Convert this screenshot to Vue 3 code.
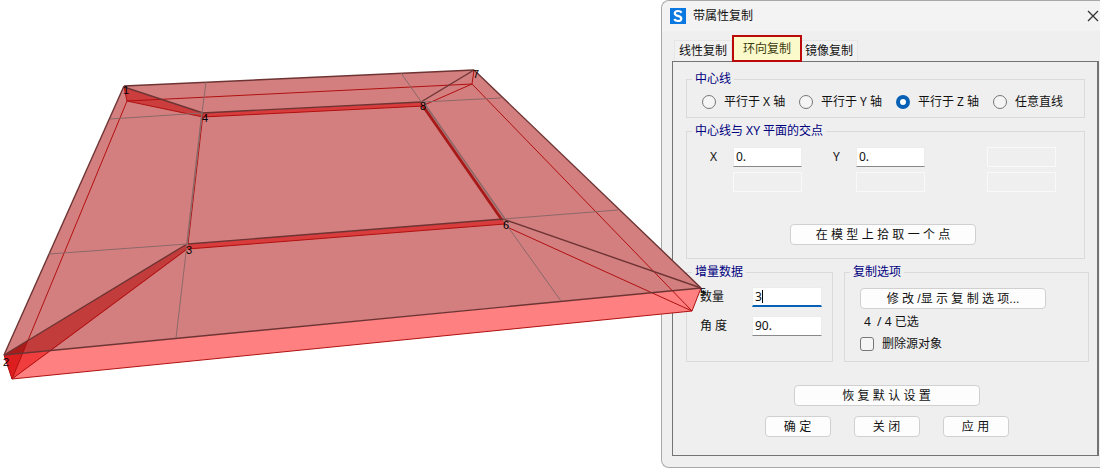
<script setup>
import { ref } from 'vue'

const tabs = ['线性复制', '环向复制', '镜像复制']
const activeTab = ref(1)
const axes = ['平行于 X 轴', '平行于 Y 轴', '平行于 Z 轴', '任意直线']
const axis = ref(2)
const x = ref('0.')
const y = ref('0.')
const count = ref('3')
const angle = ref('90.')
const removeSource = ref(false)

const gridLines = [
  [206, 82, 202, 113], [187, 244, 176, 338], [401, 73, 422, 103], [503, 220, 561, 301],
  [110, 119, 202, 113], [422, 102, 501, 98], [49, 254, 187, 244], [503, 219, 618, 210]
]
const lowerEdges = [
  [127, 101, 12, 379], [127, 101, 472, 84], [472, 84, 692, 311], [124, 87, 127, 101],
  [474, 70, 472, 84], [472, 84, 422, 106], [507, 227, 692, 311], [701, 288, 692, 311],
  [692, 311, 12, 379], [4, 355, 12, 379], [12, 379, 187, 249], [127, 101, 203, 117],
  [203, 117, 424, 106], [188, 249, 505, 224], [203, 114, 188, 244]
]
const upperEdges = [
  [124, 86, 474, 70], [474, 70, 701, 288], [701, 288, 4, 355], [4, 355, 124, 86],
  [124, 87, 203, 113], [4, 355, 187, 244], [421, 102, 474, 70], [503, 219, 701, 288],
  [202, 113, 421, 102], [188, 244, 503, 219]
]
const nodes = [
  [1, 123, 94], [2, 3, 366], [3, 186, 254], [4, 202, 122],
  [5, 700, 296], [6, 503, 229], [7, 473, 78], [8, 420, 110]
]
</script>

<template>
  <main class="workspace">
    <svg class="model" viewBox="0 0 715 468" role="img" aria-label="Model">
      <polygon points="4,355 701,288 692,311 12,379" fill="#ff8080" />
      <polygon points="124,86 474,70 701,288 4,355" fill="#d47f7f" />
      <polygon points="124,87 203,113 203,117 127,101" fill="#cc3e3e" />
      <polygon points="4,355 187,244 188,249 52,350" fill="#c23c3c" />
      <polygon points="4,355 28,340 23,353" fill="#a81c1c" />
      <polygon points="4,355 23,353 12,379" fill="#dc1e1e" />
      <polygon points="23,353 52,350 12,379" fill="#f03e3e" />
      <polygon points="202,113 421,102 424,106 203,117" fill="#d83c3c" />
      <polygon points="188,244 503,219 505,224 188,249" fill="#d83c3c" />
      <line x1="423" y1="106" x2="502" y2="220" stroke="#a81a1a" stroke-width="3" />
      <line v-for="(l, i) in lowerEdges" :key="'l' + i" class="lower" :x1="l[0]" :y1="l[1]" :x2="l[2]" :y2="l[3]" />
      <line v-for="(l, i) in upperEdges" :key="'u' + i" class="upper" :x1="l[0]" :y1="l[1]" :x2="l[2]" :y2="l[3]" />
      <line v-for="(l, i) in gridLines" :key="'g' + i" class="grid" :x1="l[0]" :y1="l[1]" :x2="l[2]" :y2="l[3]" />
      <line class="grid inner" x1="202" y1="113" x2="187" y2="244" />
      <line class="grid inner" x1="424" y1="103" x2="505" y2="219" />
      <text v-for="n in nodes" :key="n[0]" :x="n[1]" :y="n[2]">{{ n[0] }}</text>
    </svg>

    <section class="dialog" role="dialog" aria-labelledby="dialog-title">
      <header class="titlebar">
        <svg class="logo" viewBox="0 0 16 16" aria-hidden="true">
          <rect width="16" height="16" fill="#0a78e0" />
          <path d="M11.6 4.6C10.8 3.5 9.6 3 8 3 6.1 3 4.800 3.900 4.800 5.400 4.800 8.600 11.300 7.200 11.300 10.400 11.300 12 9.900 13 7.900 13 6.200 13 4.900 12.300 4.200 11.100" fill="none" stroke="#fff" stroke-width="2.200" />
        </svg>
        <h1 id="dialog-title">带属性复制</h1>
        <button class="close" type="button" aria-label="关闭窗口">
          <svg viewBox="0 0 12 12" aria-hidden="true"><path d="M1 1L11 11M11 1L1 11" fill="none" stroke="#333" stroke-width="1.300" /></svg>
        </button>
      </header>

      <nav class="tabs" role="tablist">
        <button v-for="(t, i) in tabs" :key="t" type="button" role="tab" class="tab" :class="{ active: i === activeTab }" :aria-selected="i === activeTab" @click="activeTab = i">{{ t }}</button>
      </nav>

      <form class="panel" @submit.prevent>
        <fieldset class="wide">
          <legend>中心线</legend>
          <div class="axis">
            <label v-for="(a, i) in axes" :key="a" class="choice">
              <input v-model="axis" type="radio" name="axis" :value="i">{{ a }}
            </label>
          </div>
        </fieldset>

        <fieldset class="wide">
          <legend>中心线与 XY 平面的交点</legend>
          <div class="coords">
            <label for="px">X</label><input id="px" v-model="x" type="text">
            <label for="py">Y</label><input id="py" v-model="y" type="text">
            <input class="third" type="text" disabled aria-label="Z">
            <input class="first" type="text" disabled aria-label="X2">
            <input class="second" type="text" disabled aria-label="Y2">
            <input class="third" type="text" disabled aria-label="Z2">
          </div>
          <button class="btn long pick" type="button">在 模 型 上 拾 取 一 个 点</button>
        </fieldset>

        <div class="pair">
          <fieldset>
            <legend>增量数据</legend>
            <div class="increments">
              <label for="count">数量</label>
              <div class="field">
                <input id="count" v-model="count" class="focused" type="text">
                <span class="caret" aria-hidden="true"></span>
              </div>
              <label for="angle">角 度</label>
              <div class="field"><input id="angle" v-model="angle" type="text"></div>
            </div>
          </fieldset>
          <fieldset>
            <legend>复制选项</legend>
            <div class="options">
              <button class="btn long" type="button">修 改 /显 示 复 制 选 项...</button>
              <p>4&nbsp; / 4 已选</p>
              <label class="choice"><input v-model="removeSource" type="checkbox">删除源对象</label>
            </div>
          </fieldset>
        </div>

        <div class="actions">
          <button class="btn long" type="button">恢 复 默 认 设 置</button>
          <div class="row">
            <button class="btn" type="submit">确 定</button>
            <button class="btn" type="button">关 闭</button>
            <button class="btn" type="button">应 用</button>
          </div>
        </div>
      </form>
    </section>
  </main>
</template>

<style>
body {
  margin: 0;
  background: #fff;
}
</style>

<style scoped>
* {
  box-sizing: border-box;
}
.workspace {
  position: relative;
  display: grid;
  grid-template-columns: minmax(0, 661fr) minmax(0, 439fr);
  overflow: hidden;
  font: 12px/16px "Noto Sans", "Noto Sans CJK SC", sans-serif;
  color: #111;
}
button, input {
  font: inherit;
  color: inherit;
  margin: 0;
  padding: 0;
}
.model {
  position: absolute;
  left: 0;
  top: 0;
  z-index: 1;
  width: 65%;
  pointer-events: none;
}
.model text {
  font: 11px "Liberation Sans", sans-serif;
  fill: #000;
}
.lower {
  stroke: #b01010;
}
.upper {
  stroke: #6e3434;
  stroke-width: 1.4;
}
.grid {
  stroke: #8c6868;
}
.inner {
  stroke-width: 1.6;
}
.dialog {
  grid-column: 2;
  padding: 0 1px 11px 10px;
  background: #efefef;
  border: 1px solid #a8a8a8;
  border-right: 0;
  border-radius: 8px 0 0 8px;
}
.titlebar {
  display: flex;
  align-items: center;
  height: 30px;
  margin: 0 -1px 0 -10px;
  padding: 0 0 0 8px;
  background: #f3f3f3;
  border-top-left-radius: 8px;
}
.logo {
  width: 16px;
  height: 16px;
}
h1 {
  flex: 1;
  margin: 0 0 0 7px;
  font: inherit;
}
.close {
  width: 13px;
  height: 20px;
  border: 0;
  background: none;
}
.close svg {
  display: block;
  width: 12px;
  height: 12px;
}
.tabs {
  display: flex;
  align-items: flex-end;
  height: 30px;
  padding-left: 2px;
}
.tab {
  height: 21px;
  padding: 0 4px;
  border: 1px solid #e6e6e6;
  border-bottom: 0;
  background: #f1f1f1;
}
.tab.active {
  position: relative;
  height: 27px;
  margin: 0 -2px -1px 0;
  padding: 0 9px;
  border: 2px solid #bb0808;
  background: #fbfacb;
  color: #3c3c10;
}
.panel {
  padding: 9px 8px 18px 13px;
  border: 1px solid #747474;
  border-right-width: 2px;
}
fieldset {
  min-width: 0;
  margin: 0;
  padding: 0;
  border: 1px solid #dadada;
}
legend {
  height: 16px;
  margin-left: 5px;
  padding: 0 3px;
  color: #000080;
}
.wide {
  margin: 0 4px 5px 0;
}
.axis {
  display: grid;
  grid-template-columns: repeat(4, 97px);
  padding: 5px 0 5px 15px;
}
.choice {
  display: flex;
  align-items: center;
  gap: 8px;
  height: 20px;
  white-space: nowrap;
}
input[type="radio"], input[type="checkbox"] {
  appearance: none;
  width: 14px;
  height: 14px;
  border: 1px solid #777;
  border-radius: 50%;
  background: #f5f5f5;
}
input[type="radio"]:checked {
  border: 4px solid #0560b6;
  background: #fff;
}
input[type="checkbox"] {
  border-radius: 3px;
}
input[type="checkbox"]:checked {
  background: #0560b6;
}
input[type="text"] {
  width: 100%;
  min-width: 0;
  height: 20px;
  padding: 0 2px;
  border: 1px solid #ececec;
  border-bottom-color: #888;
  background: #fff;
  outline: 0;
}
input[type="text"].focused {
  border-bottom: 2px solid #0560b6;
}
input[type="text"]:disabled {
  border: 1px solid #f9f9f9;
  background: #efefef;
}
.coords {
  display: grid;
  grid-template-columns: 23px 69px 31px 23px 69px 62px 69px;
  gap: 5px 0;
  padding: 8px 0 0 23px;
  line-height: 20px;
}
#py {
  grid-column: 5;
}
.coords label[for="py"] {
  grid-column: 4;
}
.first {
  grid-column: 2;
}
.second {
  grid-column: 5;
}
.third {
  grid-column: 7;
}
.btn {
  display: block;
  width: 66px;
  height: 21px;
  border: 1px solid #d0d0d0;
  border-radius: 4px;
  background: #fdfdfd;
  font-family: "Liberation Sans", "Noto Sans CJK SC", sans-serif;
  white-space: nowrap;
}
.long {
  width: 186px;
}
.pick {
  margin: 32px 0 13px 103px;
}
.pair {
  display: grid;
  grid-template-columns: 147fr 245fr;
  gap: 11px;
}
.increments {
  display: grid;
  grid-template-columns: 52px 70px;
  gap: 9px 0;
  padding: 7px 0 25px 13px;
  line-height: 20px;
}
.field {
  position: relative;
  height: 20px;
}
.field input {
  display: block;
}
.caret {
  position: absolute;
  left: 10px;
  top: 3px;
  width: 1px;
  height: 13px;
  background: #000;
}
.options {
  padding: 8px 0 7px 15px;
}
.options p {
  margin: 5px 0 4px 4px;
}
.actions {
  display: grid;
  gap: 10px;
  justify-items: center;
  margin: 23px 2px 0 0;
}
.row {
  display: flex;
  gap: 23px;
}
</style>
